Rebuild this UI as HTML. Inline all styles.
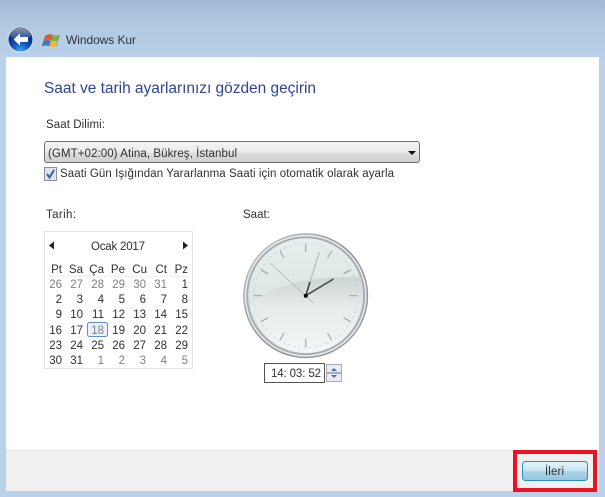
<!DOCTYPE html>
<html><head><meta charset="utf-8"><style>
html,body{margin:0;padding:0}
body{width:605px;height:497px;overflow:hidden;position:relative;background:#b9d1ea}
svg{position:absolute;left:0;top:0}
text{font-family:"Liberation Sans",sans-serif;font-size:11.5px;fill:#303030}
.c text{text-anchor:end}
.g,.c .g{fill:#808080}
</style></head><body>
<svg width="605" height="497" viewBox="0 0 605 497">
<defs>
<linearGradient id="top" x1="0" y1="0" x2="0" y2="1"><stop offset="0" stop-color="#a3bad4"/><stop offset=".45" stop-color="#b3c9e2"/><stop offset="1" stop-color="#b9d1ea"/></linearGradient>
<radialGradient id="back" cx=".5" cy=".95" r=".85"><stop offset="0" stop-color="#3fa4ee"/><stop offset=".4" stop-color="#0f55bd"/><stop offset=".8" stop-color="#0a2f7c"/><stop offset="1" stop-color="#06205a"/></radialGradient>
<linearGradient id="gloss" x1="0" y1="0" x2="0" y2="1"><stop offset="0" stop-color="#fff" stop-opacity=".55"/><stop offset="1" stop-color="#fff" stop-opacity=".1"/></linearGradient>
<linearGradient id="dd" x1="0" y1="0" x2="0" y2="1"><stop offset="0" stop-color="#f4f4f4"/><stop offset=".5" stop-color="#ebebeb"/><stop offset=".55" stop-color="#dddddd"/><stop offset="1" stop-color="#cfcfcf"/></linearGradient>
<linearGradient id="btn" x1="0" y1="0" x2="0" y2="1"><stop offset="0" stop-color="#e4f5fc"/><stop offset=".48" stop-color="#c9e5f3"/><stop offset=".52" stop-color="#a9d5ea"/><stop offset="1" stop-color="#94c5df"/></linearGradient>
<linearGradient id="face" x1="0" y1="0" x2="0" y2="1"><stop offset="0" stop-color="#e6eeee"/><stop offset=".45" stop-color="#dfe6e6"/><stop offset="1" stop-color="#d9e0e0"/></linearGradient>
<linearGradient id="swoosh" x1="0" y1="0" x2="0" y2="1"><stop offset="0" stop-color="#ccd4d4"/><stop offset=".4" stop-color="#e6ebeb"/><stop offset="1" stop-color="#f3f6f6"/></linearGradient>
<linearGradient id="rim" x1="0" y1="0" x2="1" y2="1"><stop offset="0" stop-color="#c4c8cc"/><stop offset=".5" stop-color="#8e9197"/><stop offset="1" stop-color="#9a9da3"/></linearGradient>
</defs>
<rect width="605" height="60" fill="url(#top)"/>
<rect x="6" y="57" width="593" height="393" fill="#fff"/>
<rect x="6" y="450" width="593" height="41" fill="#f0f0f0"/>
<rect x="6" y="450" width="593" height="1" fill="#dfdfdf"/>

<circle cx="20.500" cy="39.500" r="12.500" fill="url(#back)" stroke="#dbe7f4" stroke-width="1"/>
<path d="M9.500 36.500a11 8.500 0 0 1 22 0q-11 5-22 0z" fill="url(#gloss)"/>
<path d="M13.500 39.500l6.500-6v3.500h8v5h-8v3.500z" fill="#fff"/>

<path d="M45.500 35.500q3.500-2.200 7-.7l-1.700 5.500q-3.500-1.400-7 .4z" fill="#e25a26"/>
<path d="M53 35q3.500 1.400 6.500-.3l-1.700 5.700q-3.500 1.500-6.500 0z" fill="#84ad3a"/>
<path d="M43.500 41q3.500-1.800 7-.4l-1.700 5.500q-3.500-1.400-6.800.4z" fill="#3a78cc"/>
<path d="M51 40.700q3 1.500 6.500 0l-1.600 5.500q-3.500 1.400-6.600 0z" fill="#eeb92c"/>
<path d="M45.500 35.500l-3.500 11M52.600 34.800l-3.300 11.300M59.500 34.700l-3.500 11.500" stroke="#4a4a4a" stroke-width=".6" fill="none" opacity=".55"/>
<text x="66" y="44" style="font-size:12px;fill:#2a3442" textLength="70">Windows Kur</text>

<text x="44" y="93" style="font-size:15.500px;fill:#2f4596" textLength="272">Saat ve tarih ayarlarınızı gözden geçirin</text>
<text x="46" y="128" textLength="59">Saat Dilimi:</text>

<rect x="44.500" y="141.500" width="375" height="21" rx="2.500" fill="url(#dd)" stroke="#707070"/>
<text x="48" y="157" textLength="189">(GMT+02:00) Atina, Bükreş, İstanbul</text>
<path d="M408 151h8l-4 4z" fill="#111"/>

<rect x="44.500" y="167.500" width="12" height="13" fill="#dfe3ea" stroke="#8a8f96"/>
<path d="M47 174l2.500 3.500 4.500-7.500" fill="none" stroke="#3a5fb0" stroke-width="2"/>
<text x="60" y="177" textLength="334">Saati Gün Işığından Yararlanma Saati için otomatik olarak ayarla</text>

<text x="46" y="218" textLength="30">Tarih:</text>
<text x="243" y="218">Saat:</text>

<rect x="44.500" y="231.500" width="148" height="137" fill="#fff" stroke="#e2e3e6"/>
<path d="M49 245.500l5-4v8z" fill="#222"/>
<path d="M188 245.500l-5-4v8z" fill="#222"/>
<text x="91" y="250" textLength="54">Ocak 2017</text>
<path d="M49 276.500h140" stroke="#eef0f2"/>
<rect x="87.500" y="322.500" width="20" height="14" rx="2" fill="#eaf1fa" stroke="#5f8fca"/>

<g class="c">
<text x="62" y="273">Pt</text><text x="83" y="273">Sa</text><text x="104" y="273">Ça</text><text x="125" y="273">Pe</text><text x="147" y="273">Cu</text><text x="167" y="273">Ct</text><text x="188" y="273">Pz</text>

<text x="62" y="288" class="g">26</text><text x="83" y="288" class="g">27</text><text x="104" y="288" class="g">28</text><text x="125" y="288" class="g">29</text><text x="146" y="288" class="g">30</text><text x="167" y="288" class="g">31</text><text x="188" y="288">1</text>

<text x="62" y="303">2</text><text x="83" y="303">3</text><text x="104" y="303">4</text><text x="125" y="303">5</text><text x="146" y="303">6</text><text x="167" y="303">7</text><text x="188" y="303">8</text>

<text x="62" y="318">9</text><text x="83" y="318">10</text><text x="104" y="318">11</text><text x="125" y="318">12</text><text x="146" y="318">13</text><text x="167" y="318">14</text><text x="188" y="318">15</text>

<text x="62" y="334">16</text><text x="83" y="334">17</text><text x="104" y="334" class="g">18</text><text x="125" y="334">19</text><text x="146" y="334">20</text><text x="167" y="334">21</text><text x="188" y="334">22</text>

<text x="62" y="349">23</text><text x="83" y="349">24</text><text x="104" y="349">25</text><text x="125" y="349">26</text><text x="146" y="349">27</text><text x="167" y="349">28</text><text x="188" y="349">29</text>

<text x="62" y="364">30</text><text x="83" y="364">31</text><text x="104" y="364" class="g">1</text><text x="125" y="364" class="g">2</text><text x="146" y="364" class="g">3</text><text x="167" y="364" class="g">4</text><text x="188" y="364" class="g">5</text>
</g>

<!-- clock -->
<circle cx="305.700" cy="295.700" r="62.500" fill="url(#rim)"/>
<circle cx="305.700" cy="295.700" r="61" fill="#e9ecee"/>
<circle cx="305.700" cy="295.700" r="59.500" fill="#a9adb2"/>
<circle cx="305.700" cy="295.700" r="57.500" fill="url(#face)"/>
<path d="M250 304Q285 275 361 277 364 292 361 309 350 350 305.700 353 262 350 250 304z" fill="url(#swoosh)"/>
<circle cx="305.700" cy="295.700" r="52" fill="none" stroke="#b4bcc0" stroke-width="1" stroke-dasharray="1 4.450"/>
<g stroke="#a0a7ab" stroke-width="1.200">
<path d="M305.700 244v8M305.700 339v8M254 295.700h8M349 295.700h8"/>
<path d="M331.500 251l-4 7M284 333l-4 7M280 251l4 7M327.500 333l4 7M261 269.800l7 4M343.500 317.600l7 4M350.500 269.800l-7 4M268 317.600l-7 4"/>
</g>
<path d="M305.700 295.700L319.300 252" stroke="#b9bec1" stroke-width="1.300"/>
<path d="M305.700 295.700L310 282" stroke="#3d4347" stroke-width="1.600"/>
<path d="M305.700 295.700L333.500 279" stroke="#454b4f" stroke-width="1.600"/>
<path d="M270 263L313.500 303" stroke="#a6acb0" stroke-width=".6"/>
<circle cx="305.700" cy="295.700" r="2" fill="#000"/>

<rect x="264.500" y="363.500" width="60" height="19" fill="#fff" stroke="#555"/>
<text x="271" y="377" xml:space="preserve" textLength="50">14: 03: 52</text>
<rect x="326.500" y="364.500" width="15" height="8" fill="#e8ecf2" stroke="#a8adb3"/>
<rect x="326.500" y="373.500" width="15" height="8" fill="#e8ecf2" stroke="#a8adb3"/>
<path d="M331 371l3-3 3 3z" fill="#4a6fb5"/>
<path d="M331 375l3 3 3-3z" fill="#4a6fb5"/>

<rect x="522.500" y="461.500" width="65" height="19" rx="3" fill="url(#btn)" stroke="#2c90bd"/>
<text x="545" y="475" textLength="19">İleri</text>
<rect x="515" y="452" width="80" height="38" fill="none" stroke="#ee1122" stroke-width="4"/>
</svg>
</body></html>
